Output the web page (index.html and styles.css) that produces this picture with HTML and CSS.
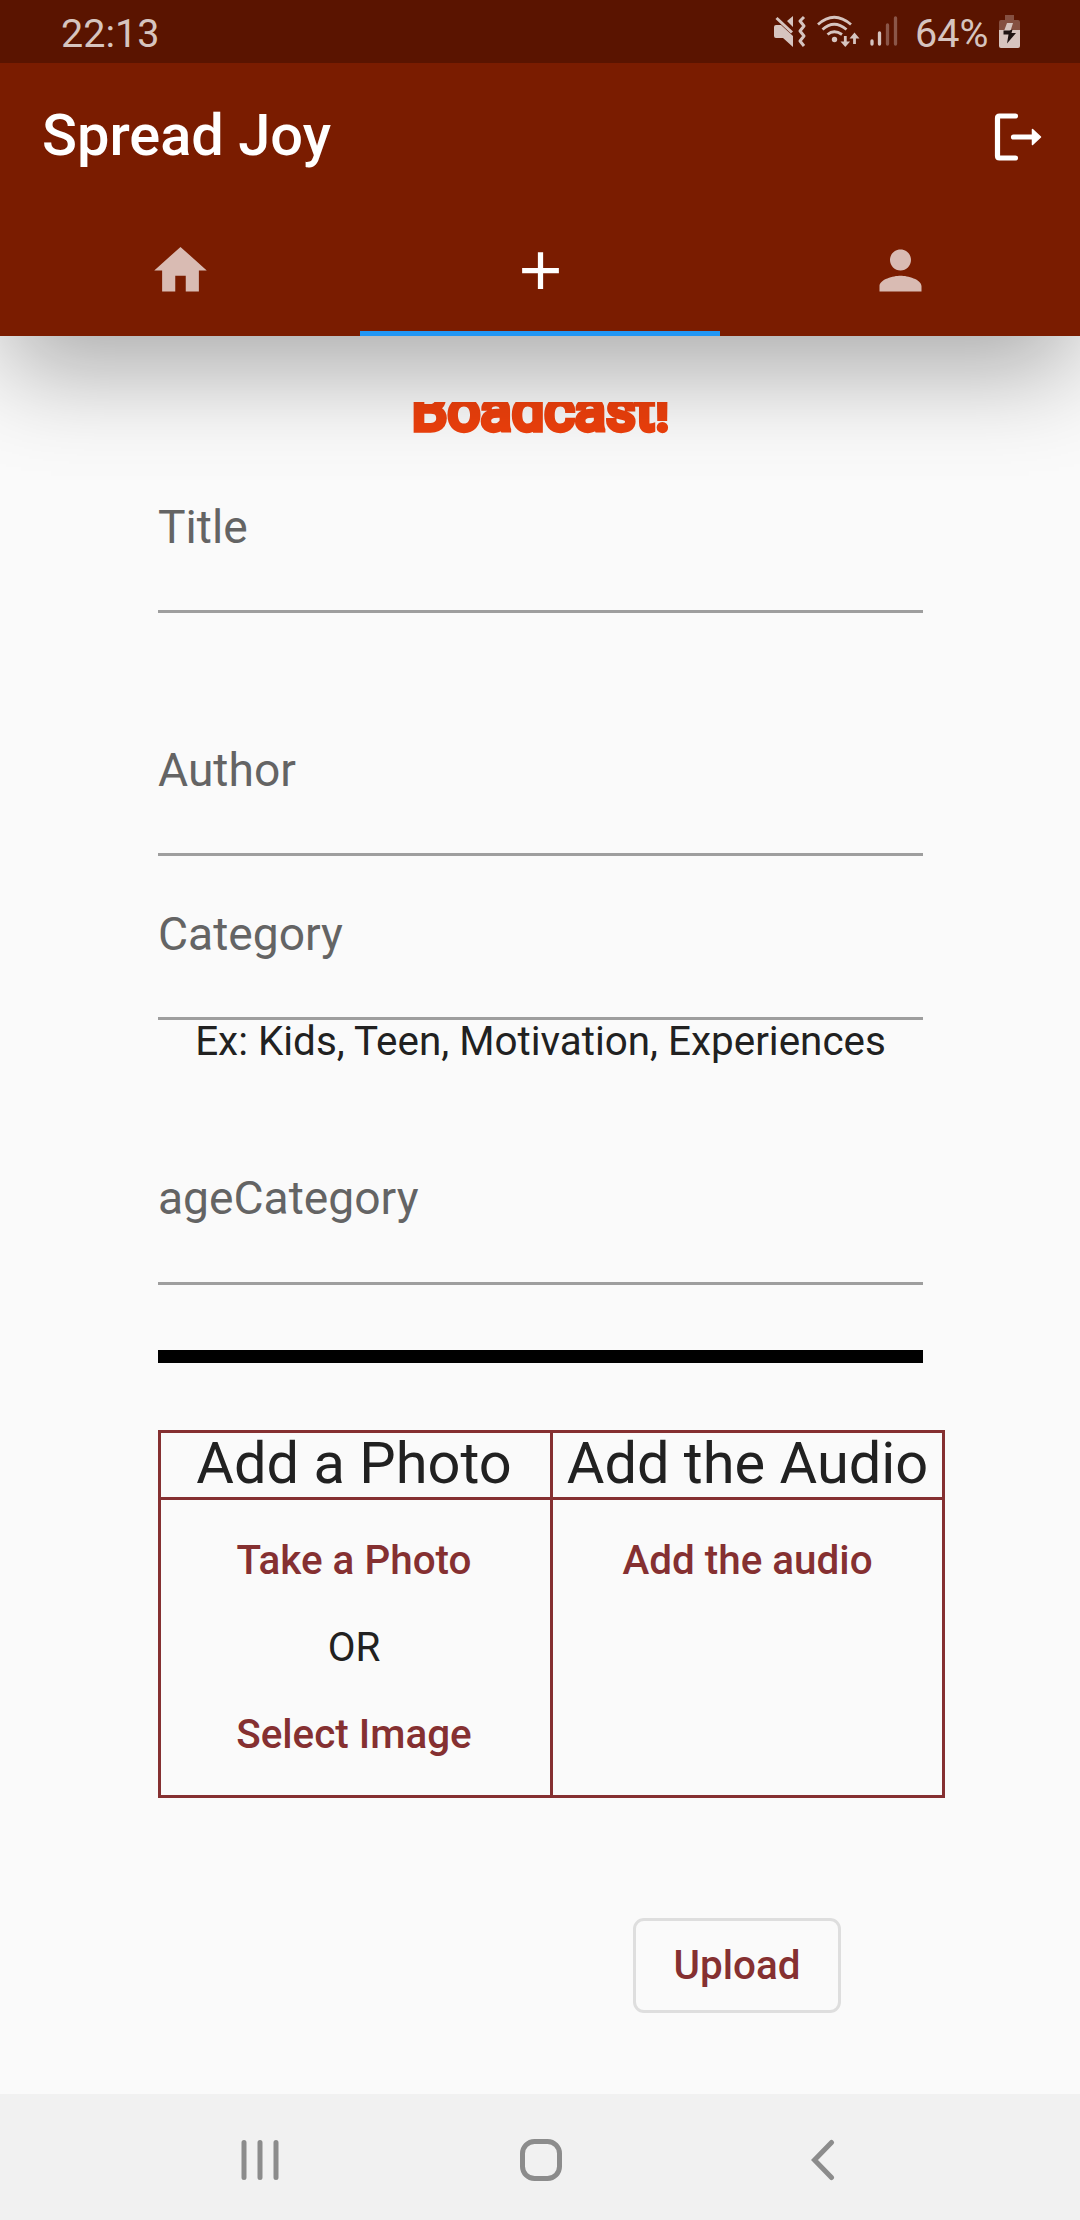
FILE: index.html
```html
<!DOCTYPE html>
<html lang="en">
<head>
<meta charset="utf-8">
<title>Spread Joy</title>
<link rel="stylesheet" href="styles.css">
</head>
<body>
<div class="screen">
  <header class="top">
    <div class="status">
      <span class="clock">22:13</span>
      <div class="status-icons">
        <svg class="mute" width="33" height="34" viewBox="0 0 33 34">
          <path d="M0 12q0-2 2-2h5L19 21V32L9 23H2q-2 0-2-2zM19 1v11l-6-6z" fill="#d6c4bf"/>
          <path d="M2.500 3L18 17.500" stroke="#d6c4bf" stroke-width="3" fill="none"/>
          <path d="M30 2l-4 4 4 5-4 5 4 5-4 5 4 5" stroke="#d6c4bf" stroke-width="3" fill="none" stroke-linejoin="round"/>
        </svg>
        <svg class="wifi" width="44" height="34" viewBox="0 0 44 34">
          <g fill="none" stroke="#d6c4bf" stroke-width="2.800">
            <path d="M2 9.500Q18-5 35 9.500M6.500 14.500Q18 4 30.500 14.500M11.500 19.500Q18 14 26 19.500"/>
            <path d="M29.300 21v9M38.500 29V20"/>
          </g>
          <circle cx="18.500" cy="24.500" r="2.700" fill="#d6c4bf"/>
          <path d="M24.500 26.500l4.800 5.500 4.800-5.500zM33.500 23.500l5-6 5 6z" fill="#d6c4bf"/>
        </svg>
        <svg class="signal" width="28" height="32" viewBox="0 0 28 32">
          <g stroke-width="3.300" stroke-linecap="round">
            <path d="M2 26v3M9.500 18v11" stroke="#d6c4bf"/>
            <path d="M17.500 10v19M25.500 3v26" stroke="#8b5648"/>
          </g>
        </svg>
        <span class="percent">64%</span>
        <svg class="battery" width="21" height="33" viewBox="0 0 21 33">
          <path d="M6 0h9v5h4q2 0 2 2v9H0V7q0-2 2-2h4z" fill="#855041"/>
          <path d="M0 15h21v16q0 2-2 2H2q-2 0-2-2z" fill="#d6c4bf"/>
          <path d="M8 8h6l-2.500 8H5z" fill="#d6c4bf"/>
          <path d="M4.500 15.500h6l3-1-1 3.500h4.500L8 28.500l1.500-9H4.500z" fill="#1e1413"/>
        </svg>
      </div>
    </div>
    <div class="appbar">
      <h1 class="app-title">Spread Joy</h1>
      <svg width="48" height="50" viewBox="0 0 48 50">
        <path d="M21.500 4H5.500Q3.500 4 3.500 6V44Q3.500 46 5.500 46H21.500M19.500 25H40" fill="none" stroke="#fff" stroke-width="5.200" stroke-linecap="round"/>
        <path d="M38.500 17.500L46.500 25 38.500 32.500z" fill="#fff" stroke="#fff" stroke-width="1.500" stroke-linejoin="round"/>
      </svg>
    </div>
    <nav class="tabs">
      <a class="tab"><svg width="63" height="63" viewBox="0 0 24 24"><path d="M10 20v-6h4v6h5v-8h3L12 3 2 12h3v8z" fill="#d9bbb3"/></svg></a>
      <a class="tab active"><svg width="63" height="63" viewBox="0 0 24 24"><path d="M19 13h-6v6h-2v-6H5v-2h6V5h2v6h6v2z" fill="#fff"/></svg></a>
      <a class="tab"><svg width="63" height="63" viewBox="0 0 24 24"><path d="M12 12c2.210 0 4-1.790 4-4s-1.790-4-4-4-4 1.790-4 4 1.790 4 4 4zm0 2c-2.670 0-8 1.340-8 4v2h16v-2c0-2.660-5.330-4-8-4z" fill="#d9bbb3"/></svg></a>
    </nav>
  </header>

  <main class="form">
    <div class="banner"><span class="banner-text">Boadcast!</span></div>
    <div class="field title"><label>Title</label></div>
    <div class="field author"><label>Author</label></div>
    <div class="field category"><label>Category</label></div>
    <p class="hint">Ex: Kids, Teen, Motivation, Experiences</p>
    <div class="field age"><label>ageCategory</label></div>
    <div class="divider"></div>
    <div class="media">
      <div class="cell head photo">Add a Photo</div>
      <div class="cell head">Add the Audio</div>
      <div class="cell body photo">
        <span class="action">Take a Photo</span>
        <span class="or">OR</span>
        <span class="action">Select Image</span>
      </div>
      <div class="cell body"><span class="action">Add the audio</span></div>
    </div>
    <button class="upload">Upload</button>
  </main>

  <footer class="navbar">
    <svg width="38" height="42" viewBox="0 0 38 42"><path d="M3 3.500v35M19 3.500v35M35 3.500v35" stroke="#8c8c8c" stroke-width="5" stroke-linecap="round"/></svg>
    <svg width="42" height="42" viewBox="0 0 42 42"><rect x="2.500" y="2.500" width="37" height="37" rx="12" fill="none" stroke="#8c8c8c" stroke-width="5"/></svg>
    <svg width="24" height="42" viewBox="0 0 24 42"><path d="M20.500 3.500L3.500 21 20.500 38.500" fill="none" stroke="#8c8c8c" stroke-width="5" stroke-linecap="round"/></svg>
  </footer>
</div>
</body>
</html>
```
FILE: styles.css
```css
* { box-sizing: border-box; }

body {
  margin: 0;
  background: #fafafa;
  color: #212121;
  font-family: Roboto, "Liberation Sans", sans-serif;
}

.screen {
  display: flex;
  flex-direction: column;
  width: 1080px;
  height: 2220px;
  overflow: hidden;
}

svg { display: block; flex: none; }

/* Header */
.top {
  position: relative;
  z-index: 1;
  flex: none;
  height: 336px;
  background: #7a1c00;
  box-shadow: 0 43px 90px -6px rgba(0, 0, 0, .31);
}

.status {
  display: flex;
  justify-content: space-between;
  height: 63px;
  padding: 0 60px 0 61px;
  background: #5a1400;
  color: #d6c4bf;
  font-size: 39.500px;
  line-height: 67px;
}

.status-icons { display: flex; }
.status-icons svg { margin-top: 15px; }
.wifi { margin-left: 9px; }
.signal { margin-left: 10px; }
.percent { margin-left: 17px; width: 72px; }
.battery { margin-left: 12px; }

.appbar {
  display: flex;
  align-items: center;
  justify-content: space-between;
  height: 147px;
  padding: 0 38px 0 42px;
}

.app-title {
  margin: 0;
  padding-bottom: 4px;
  color: #fff;
  font-size: 57.750px;
  font-weight: 500;
  line-height: 68px;
}

.tabs {
  display: grid;
  grid-template-columns: repeat(3, 1fr);
  height: 126px;
}

.tab {
  display: flex;
  align-items: center;
  justify-content: center;
  border-bottom: 5px solid transparent;
}

.tab.active { border-color: #2196f3; }

/* Form */
.form {
  display: flex;
  flex: 1;
  flex-direction: column;
  padding: 66px 157px 0 158px;
}

.banner {
  display: flex;
  align-items: flex-end;
  justify-content: center;
  height: 40px;
  overflow: hidden;
}

.banner-text {
  color: #ee400c;
  font-size: 57.750px;
  font-weight: 400;
  line-height: 64px;
  -webkit-text-stroke: 5.250px #ee400c;
}

.field {
  height: 113px;
  border-bottom: 3px solid #9e9e9e;
  color: #646464;
  font-size: 46.200px;
  line-height: 54px;
}

.title { margin-top: 58px; }
.author { margin-top: 130px; }
.category { margin-top: 51px; }
.age { height: 114px; margin-top: 106px; }

.hint {
  margin: -2px 0 0;
  font-size: 40.400px;
  line-height: 47px;
  text-align: center;
  white-space: nowrap;
}

.divider { height: 13px; margin-top: 65px; background: #000; }

.media {
  display: grid;
  grid-template-columns: 392px 392px;
  grid-template-rows: 67px 298px;
  width: 787px;
  margin-top: 67px;
  border: solid #853031;
  border-width: 0 3px 3px 0;
}

.cell {
  border: solid #853031;
  border-width: 3px 0 0 3px;
}

.head {
  font-size: 57.750px;
  line-height: 60px;
  text-align: center;
  white-space: nowrap;
}

.body {
  display: flex;
  flex-direction: column;
  align-items: center;
  gap: 40px;
  padding-top: 37px;
  font-size: 40.400px;
  line-height: 47px;
}

.photo { padding-right: 3px; }

.action,
.upload { color: #853031; font-weight: 500; }

.upload {
  align-self: flex-end;
  width: 208px;
  height: 95px;
  margin: 120px 82px 0 0;
  padding: 0;
  border: 3px solid #dedede;
  border-radius: 11px;
  background: none;
  font-family: inherit;
  font-size: 40.400px;
  line-height: 47px;
}

/* System navigation */
.navbar {
  display: grid;
  flex: none;
  grid-template-columns: 279px 291px 1fr;
  align-items: center;
  height: 126px;
  padding: 6px 0 0 241px;
  background: #f1f1f1;
}
```
